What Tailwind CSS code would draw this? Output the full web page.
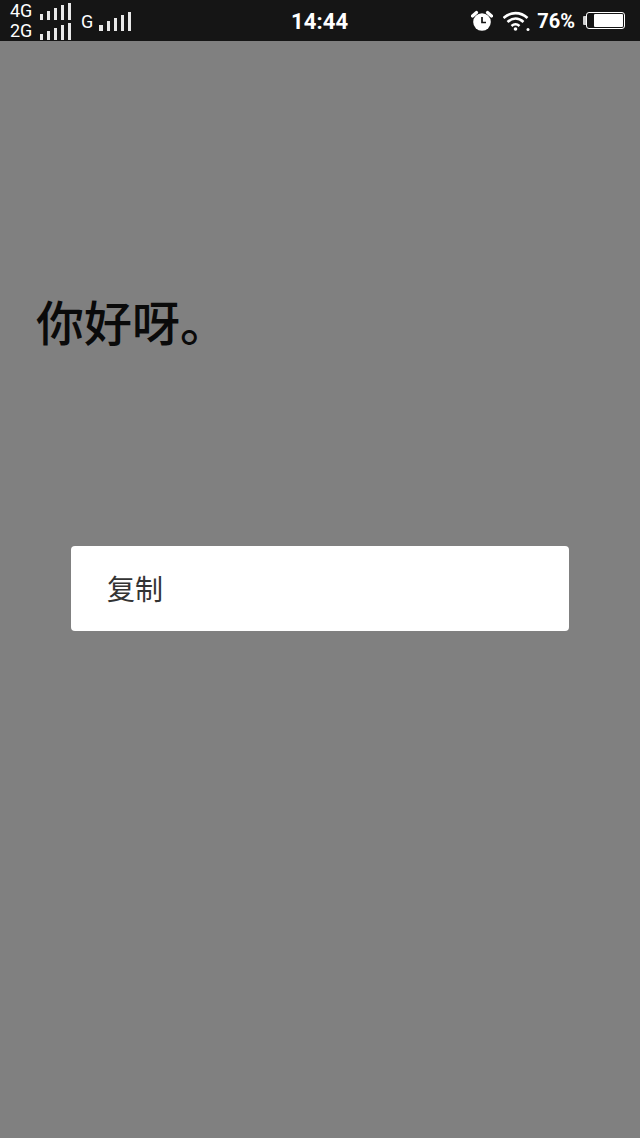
<!DOCTYPE html>
<html lang="zh">
<head>
<meta charset="utf-8">
<script src="https://cdn.jsdelivr.net/npm/@tailwindcss/browser@4"></script>
</head>
<body class="m-0">
<div class="w-[640px] h-[1138px] bg-[#808080] flex flex-col overflow-hidden font-['Roboto','Noto_Sans_CJK_SC',sans-serif]">
  <header class="relative h-[41px] shrink-0 bg-[#151515] text-white flex items-center justify-between pl-[10px] pr-[15px]">
    <div class="flex items-center">
      <div class="flex flex-col w-[61px] gap-[1px]">
        <div class="flex items-end h-[19px] justify-between">
          <span class="text-[18px] leading-[18px] w-[24px]">4G</span>
          <div class="flex items-end gap-[4px] h-[17px]">
            <i class="block w-[3px] h-[6px] bg-white/90"></i><i class="block w-[3px] h-[9px] bg-white/90"></i><i class="block w-[3px] h-[12px] bg-white/90"></i><i class="block w-[3px] h-[15px] bg-white/90"></i><i class="block w-[3px] h-[17px] bg-white/90"></i>
          </div>
        </div>
        <div class="flex items-end h-[19px] justify-between">
          <span class="text-[18px] leading-[18px] w-[24px]">2G</span>
          <div class="flex items-end gap-[4px] h-[17px]">
            <i class="block w-[3px] h-[6px] bg-white/90"></i><i class="block w-[3px] h-[9px] bg-white/90"></i><i class="block w-[3px] h-[12px] bg-white/90"></i><i class="block w-[3px] h-[15px] bg-white/90"></i><i class="block w-[3px] h-[17px] bg-white/90"></i>
          </div>
        </div>
      </div>
      <div class="flex items-end ml-[10px] mt-[2px]">
        <span class="text-[18px] leading-[18px] w-[18px]">G</span>
        <div class="flex items-end gap-[4px] h-[19px]">
          <i class="block w-[4px] h-[6px] bg-white/90"></i><i class="block w-[3px] h-[10px] bg-white/90"></i><i class="block w-[3px] h-[13px] bg-white/90"></i><i class="block w-[3px] h-[16px] bg-white/90"></i><i class="block w-[3px] h-[19px] bg-white/90"></i>
        </div>
      </div>
    </div>
    <span class="absolute left-[291px] top-[9px] text-[22px] leading-[25px] font-bold tracking-[0.1px]">14:44</span>
    <div class="flex items-center">
      <svg class="w-[22px] h-[22px]" viewBox="0 0 22 22" fill="none">
        <circle cx="11" cy="12" r="8.8" fill="#fff"/>
        <path d="M1.5 6 L5.5 2.5 M20.5 6 L16.5 2.5" stroke="#fff" stroke-width="3.2" stroke-linecap="round"/>
        <path d="M11 7v5.5h4" stroke="#151515" stroke-width="1.7" fill="none"/>
      </svg>
      <svg class="ml-[10px] w-[28px] h-[22px]" viewBox="0 0 28 22" fill="none" stroke="#fff" stroke-width="2.6">
        <path d="M0.5 8 C7.5 1.5 17.5 1.5 24.5 8"/>
        <path d="M4.5 12 C9.5 7.5 15.5 7.5 20.5 12"/>
        <path d="M8.5 16 C11 13.8 14 13.8 16.5 16"/>
        <circle cx="12.5" cy="19" r="1.8" fill="#fff" stroke="none"/>
        <circle cx="25" cy="19.5" r="1.5" fill="#fff" stroke="none"/>
      </svg>
      <span class="ml-[6px] text-[20px] leading-[24px] font-bold">76%</span>
      <div class="ml-[8px] flex items-center">
        <i class="block w-[3px] h-[9px] bg-white/80 rounded-l-[1px]"></i>
        <div class="w-[39px] h-[17px] border border-white rounded-[3px] flex justify-end p-[1px]">
          <i class="block w-[29px] h-full bg-white rounded-[1px]"></i>
        </div>
      </div>
    </div>
  </header>
  <main class="flex-1 flex flex-col">
    <p class="mt-[246px] ml-[36px] text-[48px] leading-[66px] font-medium text-[#0a0a0a] font-['Noto_Sans_CJK_SC',sans-serif]">你好呀。</p>
    <div class="mt-[193px] ml-[71px] w-[498px] h-[85px] bg-white rounded-[4px] flex items-center pl-[36px]">
      <span class="text-[28px] leading-[40px] -translate-y-[1px] text-[#333] font-['Noto_Sans_CJK_SC',sans-serif]">复制</span>
    </div>
  </main>
</div>
</body>
</html>
